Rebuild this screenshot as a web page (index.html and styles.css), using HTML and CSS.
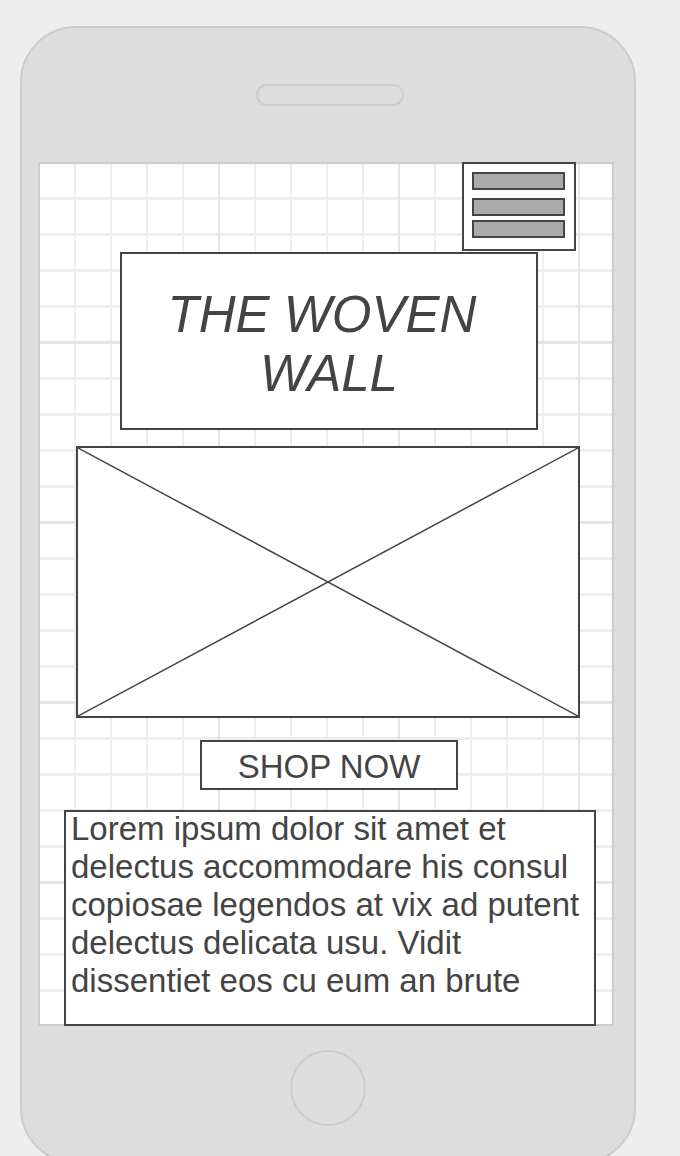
FILE: index.html
```html
<!DOCTYPE html>
<html lang="en">
<head>
<meta charset="utf-8">
<title>The Woven Wall - mobile wireframe</title>
<link rel="stylesheet" href="styles.css">
</head>
<body>
  <div class="phone">
    <div class="speaker"></div>
    <div class="screen">
      <div class="topbar">
        <div class="menu">
          <div class="bar"></div>
          <div class="bar"></div>
          <div class="bar bar-last"></div>
        </div>
      </div>
      <div class="title-box">
        <h1 class="title">THE WOVEN&nbsp;<br>WALL</h1>
      </div>
      <div class="image-ph">
        <svg class="cross" viewBox="0 0 100 100" preserveAspectRatio="none">
          <line x1="0" y1="0" x2="100" y2="100" vector-effect="non-scaling-stroke"/>
          <line x1="100" y1="0" x2="0" y2="100" vector-effect="non-scaling-stroke"/>
        </svg>
      </div>
      <div class="shop">SHOP NOW</div>
      <div class="text-box">
        <p class="copy">Lorem ipsum dolor sit amet et delectus accommodare his consul copiosae legendos at vix ad putent delectus delicata usu. Vidit dissentiet eos cu eum an brute</p>
      </div>
    </div>
    <div class="home"></div>
  </div>
</body>
</html>
```

FILE: styles.css
```css
html, body {
  margin: 0;
  padding: 0;
  height: 100%;
  overflow: hidden;
  background: #eeeeee;
}

body {
  font-family: "Liberation Sans", Arial, sans-serif;
  color: #444444;
}

.phone {
  box-sizing: border-box;
  margin: 26px 0 0 20px;
  width: 616px;
  height: 1138px;
  background: #dddddd;
  border: 2px solid #cccccc;
  border-radius: 56px;
  display: flex;
  flex-direction: column;
}

.phone > * {
  flex-shrink: 0;
}

.speaker {
  box-sizing: border-box;
  margin: 56px 0 0 234px;
  width: 148px;
  height: 22px;
  border: 2px solid #cccccc;
  border-radius: 11px;
  background: #dddddd;
}

.screen {
  box-sizing: border-box;
  margin: 56px 0 0 16px;
  width: 576px;
  height: 864px;
  border: 2px solid #cccccc;
  background-color: #ffffff;
  background-image:
    linear-gradient(to right, transparent 0 178px, #e5e5e5 178px 180px),
    linear-gradient(to bottom, transparent 0 177px, #e5e5e5 177px 179px),
    linear-gradient(to right, transparent 0 34px, #eeeeee 34px 36px),
    linear-gradient(to bottom, transparent 0 33px, #eeeeee 33px 35px);
  background-size: 180px 100%, 100% 180px, 36px 100%, 100% 36px;
  display: flex;
  flex-direction: column;
  align-items: flex-start;
}

.screen > * {
  flex-shrink: 0;
}

.topbar {
  align-self: stretch;
  display: flex;
  justify-content: flex-end;
  padding-right: 36px;
  margin-top: -2px;
}

.menu {
  box-sizing: border-box;
  width: 114px;
  height: 89px;
  border: 2px solid #444444;
  background: #ffffff;
  padding: 8px 0 0 8px;
  display: flex;
  flex-direction: column;
}

.bar {
  box-sizing: border-box;
  flex-shrink: 0;
  width: 93px;
  height: 18px;
  border: 2px solid #444444;
  background: #aaaaaa;
}

.bar + .bar {
  margin-top: 8px;
}

.bar + .bar-last {
  margin-top: 4px;
}

.title-box {
  box-sizing: border-box;
  margin: 1px 0 0 80px;
  width: 418px;
  height: 178px;
  border: 2px solid #444444;
  background: #ffffff;
  padding-top: 31px;
}

.title {
  margin: 0;
  font-size: 51px;
  font-style: italic;
  font-weight: normal;
  line-height: 59px;
  text-align: center;
  color: #444444;
}

.image-ph {
  box-sizing: border-box;
  margin: 16px 0 0 36px;
  width: 504px;
  height: 272px;
  border: 2px solid #444444;
  background: #ffffff;
}

.cross {
  display: block;
  width: 100%;
  height: 100%;
}

.cross line {
  stroke: #444444;
  stroke-width: 1.5;
}

.shop {
  box-sizing: border-box;
  margin: 22px 0 0 160px;
  width: 258px;
  height: 50px;
  border: 2px solid #444444;
  background: #ffffff;
  font-size: 33px;
  padding-top: 3px;
  display: flex;
  align-items: center;
  justify-content: center;
}

.text-box {
  box-sizing: border-box;
  margin: 20px 0 0 24px;
  width: 532px;
  height: 216px;
  border: 2px solid #444444;
  background: #ffffff;
  padding: 0 4px 0 5px;
}

.copy {
  margin: -2px 0 0;
  font-size: 33px;
  line-height: 38px;
  color: #444444;
}

.home {
  box-sizing: border-box;
  margin: 24px auto 0;
  width: 76px;
  height: 76px;
  border: 2px solid #cccccc;
  border-radius: 50%;
  background: #dddddd;
}
```
